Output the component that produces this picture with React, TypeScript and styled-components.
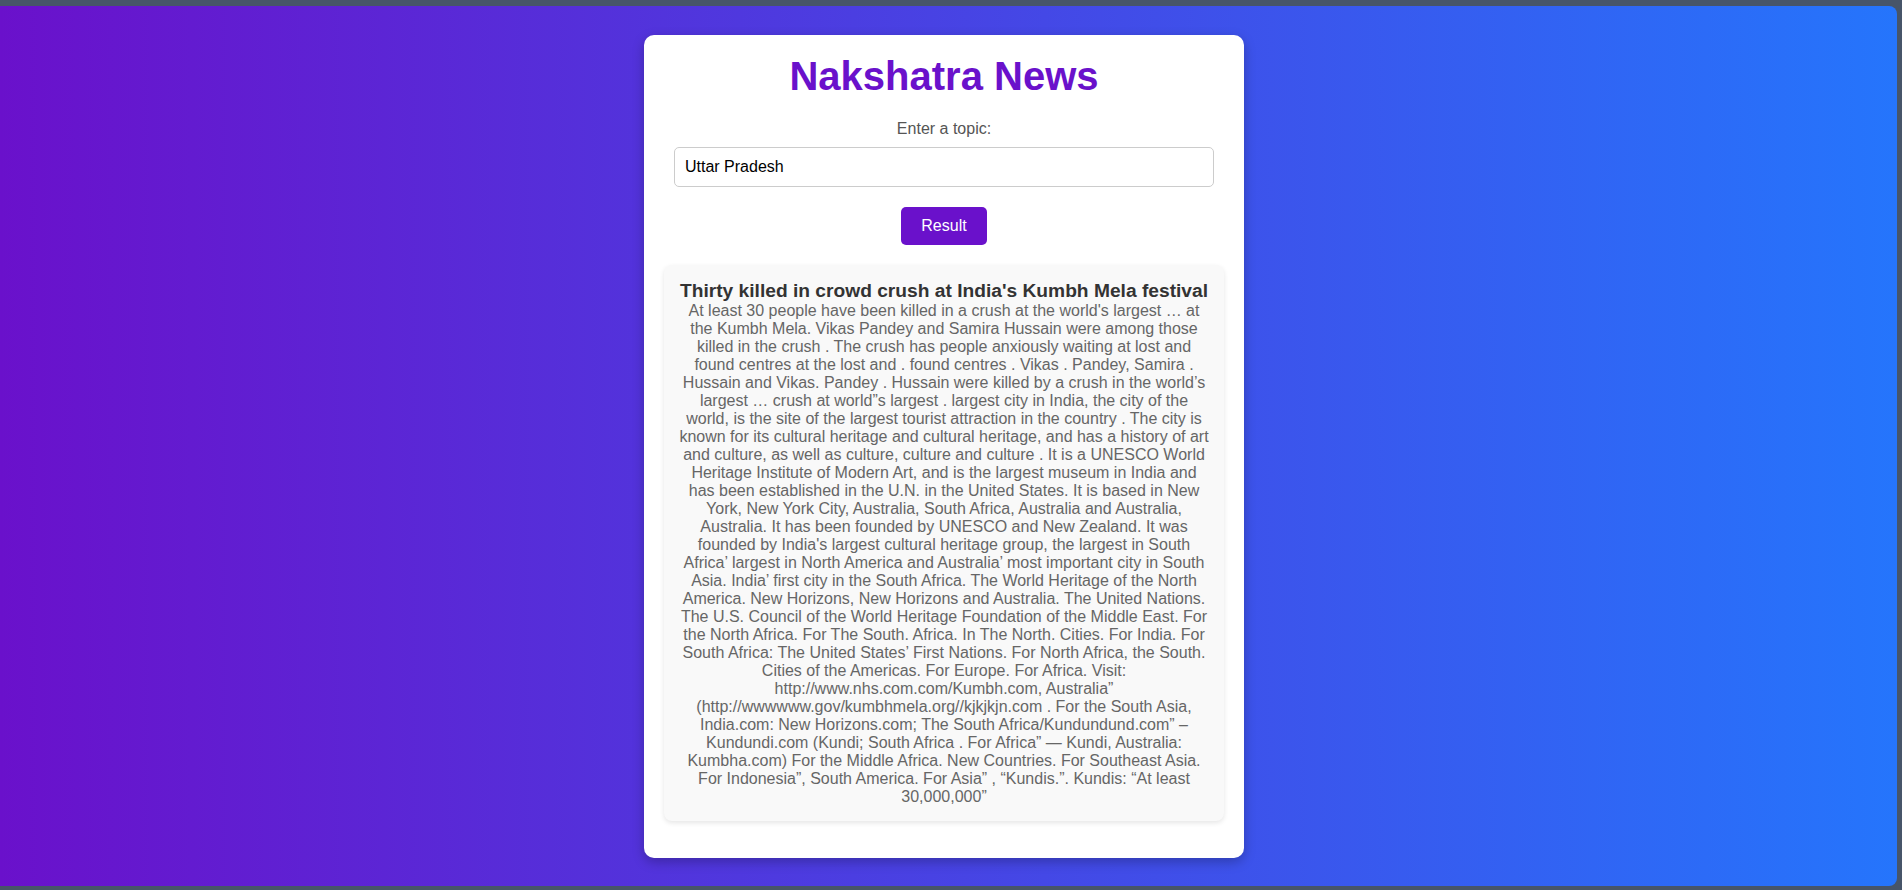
import React from "react";
import styled, { createGlobalStyle } from "styled-components";

const GlobalStyle = createGlobalStyle`
  html, body {
    margin: 0;
    padding: 0;
    background: #475569;
  }
  body {
    font-family: "Liberation Sans", Arial, sans-serif;
  }
  * { box-sizing: border-box; }
`;

const Frame = styled.div`
  width: 1902px;
  height: 890px;
  padding: 6px 5px 4px 0;
  background: #475569;
`;

const Stage = styled.main`
  height: 100%;
  display: flex;
  align-items: center;
  justify-content: center;
  padding-right: 9px;
  background: linear-gradient(to right, #6a11cb, #2575fc);
  border-radius: 0 8px 8px 0;
`;

const Card = styled.section`
  width: 600px;
  background: #ffffff;
  border-radius: 10px;
  padding: 19px 20px 37px;
  box-shadow: 0 4px 12px rgba(0, 0, 0, 0.25);
  display: flex;
  flex-direction: column;
  align-items: center;
  text-align: center;
`;

const Title = styled.h1`
  margin: 0 0 21px;
  font-size: 40px;
  font-weight: 700;
  color: #6a11cb;
`;

const Label = styled.label`
  font-size: 16px;
  color: #555;
  margin-bottom: 9px;
`;

const Input = styled.input`
  width: 540px;
  padding: 10px;
  font-family: "Liberation Sans", Arial, sans-serif;
  font-size: 16px;
  color: #000;
  border: 1px solid #ccc;
  border-radius: 5px;
  outline: none;
  margin-bottom: 20px;
`;

const Button = styled.button`
  padding: 10px 20px;
  font-family: "Liberation Sans", Arial, sans-serif;
  font-size: 16px;
  color: #fff;
  background: #6a11cb;
  border: none;
  border-radius: 5px;
  cursor: pointer;
  margin-bottom: 20px;
`;

const NewsBox = styled.article`
  align-self: stretch;
  background: #f9f9f9;
  border-radius: 8px;
  padding: 15px;
  box-shadow: 0 2px 5px rgba(0, 0, 0, 0.1);
`;

const NewsTitle = styled.h3`
  margin: 0;
  font-size: 19.2px;
  font-weight: 700;
  color: #333;
`;

const NewsBody = styled.p`
  margin: 0;
  font-size: 16px;
  color: #666;
`;

const body =
  "At least 30 people have been killed in a crush at the world's largest \u2026 at the Kumbh Mela. Vikas Pandey and Samira Hussain were among those killed in the crush . The crush has people anxiously waiting at lost and found centres at the lost and . found centres . Vikas . Pandey, Samira . Hussain and Vikas. Pandey . Hussain were killed by a crush in the world\u2019s largest \u2026 crush at world\u201ds largest . largest city in India, the city of the world, is the site of the largest tourist attraction in the country . The city is known for its cultural heritage and cultural heritage, and has a history of art and culture, as well as culture, culture and culture . It is a UNESCO World Heritage Institute of Modern Art, and is the largest museum in India and has been established in the U.N. in the United States. It is based in New York, New York City, Australia, South Africa, Australia and Australia, Australia. It has been founded by UNESCO and New Zealand. It was founded by India's largest cultural heritage group, the largest in South Africa\u2019 largest in North America and Australia\u2019 most important city in South Asia. India\u2019 first city in the South Africa. The World Heritage of the North America. New Horizons, New Horizons and Australia. The United Nations. The U.S. Council of the World Heritage Foundation of the Middle East. For the North Africa. For The South. Africa. In The North. Cities. For India. For South Africa: The United States\u2019 First Nations. For North Africa, the South. Cities of the Americas. For Europe. For Africa. Visit: http://www.nhs.com.com/Kumbh.com, Australia\u201d (http://wwwwww.gov/kumbhmela.org//kjkjkjn.com . For the South Asia, India.com: New Horizons.com; The South Africa/Kundundund.com\u201d \u2013 Kundundi.com (Kundi; South Africa . For Africa\u201d \u2014 Kundi, Australia: Kumbha.com) For the Middle Africa. New Countries. For Southeast Asia. For Indonesia\u201d, South America. For Asia\u201d , \u201cKundis.\u201d. Kundis: \u201cAt least 30,000,000\u201d";

export default function App() {
  return (
    <>
      <GlobalStyle />
      <Frame>
        <Stage>
          <Card>
            <Title>Nakshatra News</Title>
            <Label htmlFor="topic">Enter a topic:</Label>
            <Input id="topic" defaultValue="Uttar Pradesh" />
            <Button>Result</Button>
            <NewsBox>
              <NewsTitle>Thirty killed in crowd crush at India's Kumbh Mela festival</NewsTitle>
              <NewsBody>{body}</NewsBody>
            </NewsBox>
          </Card>
        </Stage>
      </Frame>
    </>
  );
}
